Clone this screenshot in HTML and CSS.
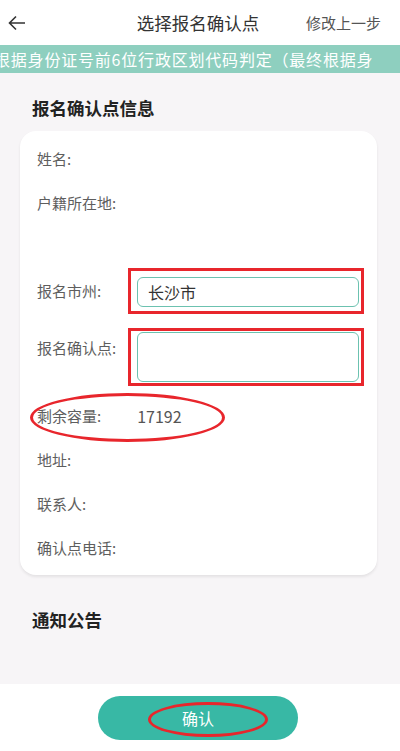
FILE: index.html
```html
<!DOCTYPE html>
<html lang="zh-CN">

<head>
  <meta charset="UTF-8">
  <meta name="viewport" content="width=device-width, initial-scale=1.0">
  <title>选择报名确认点</title>
  <link rel="stylesheet" href="styles.css">
</head>

<body>
  <div class="page">
    <div class="nav-bar">
      <div class="nav-back">
        <svg width="18" height="16" viewBox="0 0 18 16">
          <path d="M17 8H2M8 1.5L1.5 8L8 14.5" fill="none" stroke="#333" stroke-width="1.6" />
        </svg>
      </div>
      <div class="nav-title">选择报名确认点</div>
      <div class="nav-right">修改上一步</div>
    </div>

    <div class="notice-bar">
      <div class="notice-track">
        <div class="notice-text">根据身份证号前6位行政区划代码判定（最终根据身</div>
      </div>
    </div>

    <div class="content">
      <h3 class="section-title">报名确认点信息</h3>

      <div class="info-card">
        <div class="info-row">
          <span class="info-label">姓名:</span>
        </div>
        <div class="info-row info-row-tall">
          <span class="info-label">户籍所在地:</span>
        </div>
        <div class="info-row info-row-select">
          <span class="info-label">报名市州:</span>
          <div class="mark-box">
            <div class="select-box">长沙市</div>
          </div>
        </div>
        <div class="info-row info-row-point">
          <span class="info-label">报名确认点:</span>
          <div class="mark-box mark-box-tall">
            <div class="select-box select-box-tall"></div>
          </div>
        </div>
        <div class="info-row info-row-capacity">
          <span class="info-label">剩余容量:</span>
          <span class="info-value">17192</span>
          <div class="mark-ellipse capacity-mark"></div>
        </div>
        <div class="info-row">
          <span class="info-label">地址:</span>
        </div>
        <div class="info-row">
          <span class="info-label">联系人:</span>
        </div>
        <div class="info-row">
          <span class="info-label">确认点电话:</span>
        </div>
      </div>

      <h3 class="section-title notice-title">通知公告</h3>
    </div>

    <div class="footer">
      <div class="confirm-btn">
        确认
        <div class="mark-ellipse btn-mark"></div>
      </div>
    </div>
  </div>
</body>

</html>
```

FILE: styles.css
```css
* {
  box-sizing: border-box;
}

body {
  margin: 0;
  font-family: "Noto Sans CJK SC", "Noto Sans", sans-serif;
  background-color: #fff;
}

.page {
  width: 400px;
  height: 751px;
  display: flex;
  flex-direction: column;
  overflow: hidden;
}

/* top bar */
.nav-bar {
  height: 45px;
  display: flex;
  align-items: center;
  position: relative;
  background-color: #fff;
}

.nav-back {
  width: 40px;
  padding-left: 8px;
  padding-top: 3px;
}

.nav-title {
  flex: 1;
  text-align: center;
  font-size: 17.5px;
  color: #333;
  padding-left: 50px;
}

.nav-right {
  width: 94px;
  font-size: 15px;
  color: #555;
}

.notice-bar {
  height: 28px;
  background-color: #8ecfbf;
  display: flex;
  align-items: center;
}

.notice-track {
  width: 376px;
  overflow: hidden;
}

.notice-text {
  white-space: nowrap;
  font-size: 16px;
  letter-spacing: 0.8px;
  color: #fff;
  margin-left: -6px;
}

/* main area */
.content {
  flex: 1;
  background-color: #f7f5f7;
  padding: 0 23px 0 20px;
}

.section-title {
  margin: 23px 0 11px 12px;
  font-size: 17.5px;
  line-height: 24px;
  font-weight: bold;
  color: #222;
}

.notice-title {
  margin-top: 33px;
}

.info-card {
  background-color: #fff;
  border-radius: 16px;
  padding: 6px 17px 5px;
  box-shadow: 0 2px 3px rgba(0, 0, 0, 0.08);
}

.info-row {
  display: flex;
  align-items: center;
  min-height: 44px;
  position: relative;
}

.info-label {
  font-size: 15px;
  color: #5e5e5e;
  line-height: 22px;
}

.info-row-tall {
  height: 87px;
  align-items: flex-start;
  padding-top: 11px;
}

.info-row-select {
  min-height: 46px;
}

.info-row-point {
  margin-top: 14px;
  align-items: flex-start;
}

.info-row-point .info-label {
  margin-top: 9px;
}

.info-row-capacity {
  margin-top: 8px;
}

.info-value {
  font-size: 16px;
  color: #555;
  margin-left: 36px;
}

/* red annotation marks */
.mark-box {
  margin-left: auto;
  margin-right: -4px;
  width: 236px;
  border: 3px solid #e8262c;
  padding: 6px 2px 4px 6px;
}

.mark-box-tall {
  padding: 1px 2px 1px 6px;
}

.select-box {
  height: 30px;
  border: 1px solid #6cc2b0;
  border-radius: 6px;
  padding-left: 10px;
  font-size: 16px;
  line-height: 28px;
  color: #333;
}

.select-box-tall {
  height: 50px;
}

.mark-ellipse {
  position: absolute;
  border: 3px solid #e8262c;
  border-radius: 50%;
  pointer-events: none;
}

.capacity-mark {
  left: -7px;
  top: -1px;
  width: 195px;
  height: 49px;
}

/* bottom */
.footer {
  height: 67px;
  background-color: #fff;
  display: flex;
  justify-content: center;
  padding-top: 12px;
}

.confirm-btn {
  position: relative;
  width: 200px;
  height: 44px;
  margin-right: 4px;
  border-radius: 22px;
  background-color: #38b8a5;
  color: #fff;
  font-size: 16px;
  line-height: 44px;
  text-align: center;
}

.btn-mark {
  left: 50px;
  top: 6px;
  width: 120px;
  height: 35px;
}
```
